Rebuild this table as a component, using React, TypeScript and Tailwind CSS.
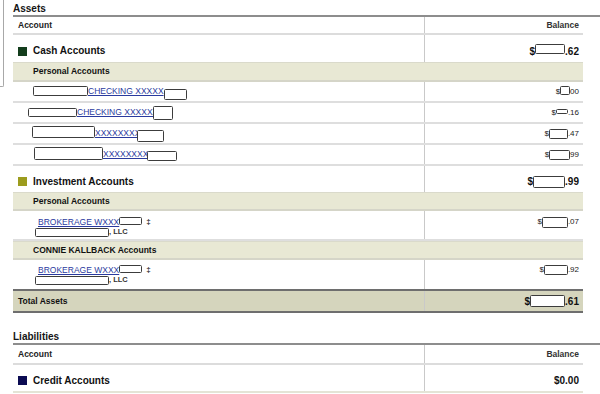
import React from "react";

const Box = ({ className = "" }: { className?: string }) => (
  <span
    className={`inline-block shrink-0 border border-[#3c3c3c] bg-white rounded-[1.5px] ${className}`}
  />
);

const Link = ({ children }: { children: React.ReactNode }) => (
  <a className="text-[#2a3a9e] underline decoration-[#2a3a9e] cursor-pointer whitespace-nowrap">
    {children}
  </a>
);

const Divider = "border-l border-[#c9c9c9]";

function Heading({ title }: { title: string }) {
  return (
    <div className="h-[17px] border-b-2 border-[#8d8d8d] pt-[3px] text-[10px] leading-[12px] font-bold text-[#151515]">
      {title}
    </div>
  );
}

function HeaderRow({ h }: { h: string }) {
  return (
    <div className={`grid grid-cols-[411px_159px] border-b-2 border-[#dcdcdc] ${h}`}>
      <div className="flex items-center pl-[5px] text-[8.5px] font-bold text-[#222]">Account</div>
      <div className={`flex items-center justify-end pr-[4px] text-[8.5px] font-bold text-[#333] ${Divider}`}>
        Balance
      </div>
    </div>
  );
}

function GroupRow({
  color,
  label,
  amount,
  h,
}: {
  color: string;
  label: string;
  amount: React.ReactNode;
  h: string;
}) {
  return (
    <div className={`grid grid-cols-[411px_159px] ${h}`}>
      <div className="flex items-center gap-[6px] pl-[5px] pt-[5px]">
        <span className={`inline-block w-[9px] h-[9px] ${color}`} />
        <span className="text-[10px] font-bold text-[#111] leading-[12px]">{label}</span>
      </div>
      <div className={`flex items-center justify-end pr-[4px] pt-[5px] ${Divider}`}>{amount}</div>
    </div>
  );
}

function SubHeader({ label, h }: { label: string; h: string }) {
  return (
    <div
      className={`flex items-center pl-[20px] bg-[#e8e8d4] border-t border-[#dadacb] border-b-2 border-b-[#d5d5c8] text-[8.5px] font-bold text-[#111] ${h}`}
    >
      {label}
    </div>
  );
}

function DataRow({ left, right }: { left: React.ReactNode; right: React.ReactNode }) {
  return (
    <div className="grid grid-cols-[411px_159px] h-[21px] border-b-2 border-[#dedede]">
      <div className="flex items-center text-[8.5px]">{left}</div>
      <div className={`flex items-center justify-end pr-[4px] text-[8px] text-[#222] ${Divider}`}>{right}</div>
    </div>
  );
}

function BrokerageRow({
  pt,
  h,
  amount,
  border,
}: {
  pt: string;
  h: string;
  amount: React.ReactNode;
  border: string;
}) {
  return (
    <div className={`grid grid-cols-[411px_159px] ${h} ${border}`}>
      <div className={`flex flex-col pl-[25px] ${pt}`}>
        <div className="flex items-center h-[10px] text-[8.5px] leading-[10px]">
          <Link>BROKERAGE WXXX</Link>
          <Box className="w-[23px] h-[8px] -translate-y-[1px]" />
          <span className="ml-[4px] text-[8px] font-bold text-[#333]">‡</span>
        </div>
        <div className="flex items-center h-[10px] -ml-[3px] text-[7.5px] leading-[10px] text-[#333]">
          <Box className="w-[74px] h-[9px]" />
          <span className="font-bold">, LLC</span>
        </div>
      </div>
      <div className={`flex justify-end pr-[4px] ${pt} ${Divider}`}>
        <div className="flex items-center h-[10px] text-[8px] text-[#222]">{amount}</div>
      </div>
    </div>
  );
}

export default function App() {
  return (
    <div className="relative w-[600px] h-[394px] overflow-hidden bg-white font-['Liberation_Sans',Arial,sans-serif] text-[#111]">
      <div className="absolute left-0 top-0 w-[4px] h-[87px] border-r border-b border-[#a8a8a8] rounded-br-[2px]" />
      <div className="pl-[13px]">
        <Heading title="Assets" />
        <div className="w-[570px]">
          <HeaderRow h="h-[18px]" />
          <GroupRow
            color="bg-[#133d1c]"
            label="Cash Accounts"
            h="h-[27px]"
            amount={
              <span className="flex items-center text-[10px] font-bold">
                $<Box className="w-[30px] h-[10px] -translate-y-[2px]" />.62
              </span>
            }
          />
          <SubHeader label="Personal Accounts" h="h-[20px]" />
          <DataRow
            left={
              <div className="flex items-center pl-[20px]">
                <Box className="w-[55px] h-[10px] -translate-y-[1px]" />
                <Link>CHECKING XXXXX</Link>
                <Box className="w-[23px] h-[11px] translate-y-[3px]" />
              </div>
            }
            right={
              <span className="flex items-center">
                $<Box className="w-[10px] h-[9px] -translate-y-[1px]" />00
              </span>
            }
          />
          <DataRow
            left={
              <div className="flex items-center pl-[15px]">
                <Box className="w-[49px] h-[9px]" />
                <Link>CHECKING XXXXXX</Link>
                <Box className="w-[20px] h-[14px] -ml-[5px]" />
              </div>
            }
            right={
              <span className="flex items-center">
                $<Box className="w-[12px] h-[5px] -translate-y-[1px]" />.16
              </span>
            }
          />
          <DataRow
            left={
              <div className="flex items-center pl-[19px]">
                <Box className="w-[63px] h-[12px] -translate-y-[2px]" />
                <Link>XXXXXXXX</Link>
                <Box className="w-[27px] h-[12px] -ml-[3px] translate-y-[2px]" />
              </div>
            }
            right={
              <span className="flex items-center">
                $<Box className="w-[19px] h-[10px]" />.47
              </span>
            }
          />
          <DataRow
            left={
              <div className="flex items-center pl-[21px]">
                <Box className="w-[69px] h-[13px] -translate-y-[1px]" />
                <Link>XXXXXXXXX</Link>
                <Box className="w-[30px] h-[10px] -ml-[7px] translate-y-[1px]" />
              </div>
            }
            right={
              <span className="flex items-center">
                $<Box className="w-[21px] h-[10px]" />99
              </span>
            }
          />
          <GroupRow
            color="bg-[#9c9c1e]"
            label="Investment Accounts"
            h="h-[26px]"
            amount={
              <span className="flex items-center text-[10px] font-bold">
                $<Box className="w-[32px] h-[12px]" />.99
              </span>
            }
          />
          <SubHeader label="Personal Accounts" h="h-[19px]" />
          <BrokerageRow
            pt="pt-[6px]"
            h="h-[30px]"
            border="border-b-2 border-[#dedede]"
            amount={
              <span className="flex items-center">
                $<Box className="w-[26px] h-[11px]" />.07
              </span>
            }
          />
          <SubHeader label="CONNIE KALLBACK Accounts" h="h-[19px]" />
          <BrokerageRow
            pt="pt-[5px]"
            h="h-[29px]"
            border=""
            amount={
              <span className="flex items-center">
                $<Box className="w-[24px] h-[10px]" />.92
              </span>
            }
          />
          <div className="grid grid-cols-[411px_159px] h-[24px] bg-[#d5d5bd] border-y-2 border-[#6e6e6e]">
            <div className="flex items-center pl-[5px] text-[8.5px] font-bold text-[#111]">Total Assets</div>
            <div className={`flex items-center justify-end pr-[4px] ${Divider}`}>
              <span className="flex items-center text-[10px] font-bold">
                $<Box className="w-[35px] h-[12px]" />.61
              </span>
            </div>
          </div>
        </div>

        <div className="mt-[15px]">
          <Heading title="Liabilities" />
        </div>
        <div className="w-[570px]">
          <HeaderRow h="h-[20px]" />
          <div className="border-b-2 border-[#e4e4d6]">
            <GroupRow
              color="bg-[#0b0b52]"
              label="Credit Accounts"
              h="h-[26px]"
              amount={<span className="text-[10px] font-bold">$0.00</span>}
            />
          </div>
        </div>
      </div>
    </div>
  );
}
